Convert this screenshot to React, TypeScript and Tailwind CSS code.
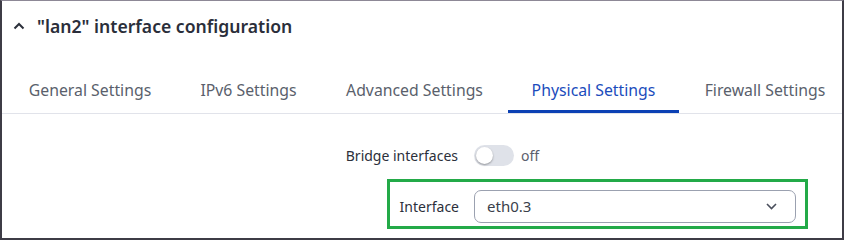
import React from "react";

const tabs = [
  { label: "General Settings", w: "w-[172px]" },
  { label: "IPv6 Settings", w: "w-[145px]" },
  { label: "Advanced Settings", w: "w-[187px]" },
  { label: "Physical Settings", w: "w-[171px]" },
  { label: "Firewall Settings", w: "w-[172px]" },
];

const App: React.FC = () => {
  const active = "Physical Settings";

  return (
    <div
      className="w-[844px] h-[240px] overflow-hidden bg-white border-t border-t-[#8d8896] border-l-2 border-r-2 border-b-2 border-[#3e3c46] text-[#2c303b]"
      style={{ fontFamily: '"Noto Sans", "Open Sans", sans-serif' }}
    >
      {/* Header */}
      <div className="h-[49px] flex items-center pl-[11px]">
        <svg width="12" height="8" viewBox="0 0 12 8" className="text-[#2c303b]">
          <polyline points="1.5,6.5 6,2 10.5,6.5" fill="none" stroke="currentColor" strokeWidth="2" />
        </svg>
        <span className="ml-[12px] text-[17.6px] font-semibold leading-[24px] text-[#2a2e3a]">
          "lan2" interface configuration
        </span>
      </div>

      {/* Tabs */}
      <div className="mt-[29px] flex pl-[2px] border-b border-[#e1e3ea] whitespace-nowrap">
        {tabs.map((t) => (
          <div
            key={t.label}
            className={
              t.label === active
                ? `${t.w} shrink-0 text-center pb-[9px] leading-[22px] text-[15.8px] border-b-[3px] border-[#0b40b4] text-[#1b4cbc]`
                : `${t.w} shrink-0 text-center pb-[9px] leading-[22px] text-[15.8px] border-b-[3px] border-transparent text-[#5a5f6c]`
            }
          >
            {t.label}
          </div>
        ))}
      </div>

      {/* Form */}
      <div className="mt-[31px] flex items-center h-[21px]">
        <div className="w-[456px] text-right text-[14px] text-[#2c303b]">Bridge interfaces</div>
        <div className="ml-[16px] w-[40px] h-[21px] rounded-full bg-[#dfe2e9] p-[2px] flex items-center">
          <div className="w-[17px] h-[17px] rounded-full bg-white shadow-[0_1px_2px_rgba(0,0,0,0.35)]" />
        </div>
        <span className="ml-[7px] text-[14px] text-[#5b606d]">off</span>
      </div>

      <div className="mt-[13px] ml-[385px] w-[421px] h-[50px] border-[3px] border-[#23aa48] flex items-start pt-[8px]">
        <div className="w-[69px] text-right text-[14px] leading-[33px] text-[#2c303b]">Interface</div>
        <div className="ml-[15px] w-[322px] h-[33px] rounded-[7px] border border-[#9ba1b0] flex items-center justify-between pl-[12px] pr-[18px]">
          <span className="text-[15px] text-[#3a3f4b]">eth0.3</span>
          <svg width="11" height="7" viewBox="0 0 11 7" className="text-[#4a4f5c]">
            <polyline points="1,1 5.5,5.5 10,1" fill="none" stroke="currentColor" strokeWidth="1.6" />
          </svg>
        </div>
      </div>
    </div>
  );
};

export default App;
